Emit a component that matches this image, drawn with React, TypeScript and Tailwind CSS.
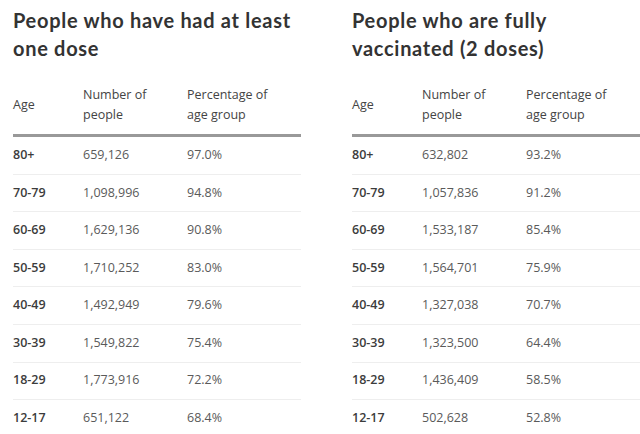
const tables = [
  {
    title: "People who have had at least one dose",
    rows: [
      ["80+", "659,126", "97.0%"],
      ["70-79", "1,098,996", "94.8%"],
      ["60-69", "1,629,136", "90.8%"],
      ["50-59", "1,710,252", "83.0%"],
      ["40-49", "1,492,949", "79.6%"],
      ["30-39", "1,549,822", "75.4%"],
      ["18-29", "1,773,916", "72.2%"],
      ["12-17", "651,122", "68.4%"],
    ],
  },
  {
    title: "People who are fully vaccinated (2 doses)",
    rows: [
      ["80+", "632,802", "93.2%"],
      ["70-79", "1,057,836", "91.2%"],
      ["60-69", "1,533,187", "85.4%"],
      ["50-59", "1,564,701", "75.9%"],
      ["40-49", "1,327,038", "70.7%"],
      ["30-39", "1,323,500", "64.4%"],
      ["18-29", "1,436,409", "58.5%"],
      ["12-17", "502,628", "52.8%"],
    ],
  },
];

const VaccineTable = ({ title, rows }: { title: string; rows: string[][] }) => (
  <section className="w-[288px] shrink-0">
    <h2 className="pt-[6px] pr-1 text-[20px] leading-[28px] font-bold tracking-[0.7px] text-[#333] font-['Lato',sans-serif]">
      {title}
    </h2>
    <div className="mt-[23px] grid grid-cols-[70px_104px_1fr] items-center border-b-[3px] border-[#999] pb-[9px] text-[12.5px] leading-[20px] text-[#444]">
      <span>Age</span>
      <span>Number of<br />people</span>
      <span>Percentage of<br />age group</span>
    </div>
    {rows.map(([age, count, pct]) => (
      <div
        key={age}
        className="grid h-[37.6px] grid-cols-[70px_104px_1fr] items-center border-b border-[#eeeeee] text-[12.5px]"
      >
        <span className="font-semibold text-[#3c3c3c]">{age}</span>
        <span className="text-[#5a5a5a]">{count}</span>
        <span className="text-[#5a5a5a]">{pct}</span>
      </div>
    ))}
  </section>
);

export default function App() {
  return (
    <div className="flex h-[434px] w-[640px] gap-[51px] overflow-hidden bg-white pl-[13px] font-['Open_Sans',sans-serif]">
      {tables.map((t) => (
        <VaccineTable key={t.title} title={t.title} rows={t.rows} />
      ))}
    </div>
  );
}
